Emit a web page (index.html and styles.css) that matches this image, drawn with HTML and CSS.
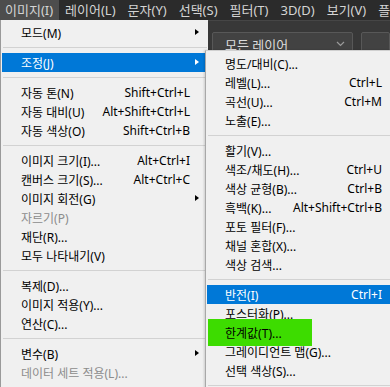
FILE: index.html
```html
<!DOCTYPE html>
<html lang="ko">
<head>
    <meta charset="UTF-8">
    <meta name="viewport" content="width=device-width, initial-scale=1.0">
    <title>이미지 메뉴</title>
    <link rel="stylesheet" href="styles.css">
</head>
<body>
    <div class="app">
        <nav class="menubar">
            <span class="menubar-item active">이미지(I)</span>
            <span class="menubar-item">레이어(L)</span>
            <span class="menubar-item">문자(Y)</span>
            <span class="menubar-item">선택(S)</span>
            <span class="menubar-item">필터(T)</span>
            <span class="menubar-item">3D(D)</span>
            <span class="menubar-item">보기(V)</span>
            <span class="menubar-item">플러그인(G)</span>
        </nav>

        <div class="options">
            <div class="select">
                <span>모든 레이어</span>
                <svg width="9" height="6" viewBox="0 0 9 6"><path d="M1 1 L4.5 4.5 L8 1" fill="none" stroke="#9a9a9a" stroke-width="1.2"/></svg>
            </div>
            <div class="select small"></div>
        </div>

        <!-- 이미지 메뉴 -->
        <ul class="menu main-menu">
            <li class="item"><span class="label">모드(M)</span><span class="arrow"></span></li>
            <li class="sep"></li>
            <li class="item selected"><span class="label">조정(J)</span><span class="arrow"></span></li>
            <li class="sep"></li>
            <li class="item"><span class="label">자동 톤(N)</span><span class="key">Shift+Ctrl+L</span><span class="arrow none"></span></li>
            <li class="item"><span class="label">자동 대비(U)</span><span class="key">Alt+Shift+Ctrl+L</span><span class="arrow none"></span></li>
            <li class="item"><span class="label">자동 색상(O)</span><span class="key">Shift+Ctrl+B</span><span class="arrow none"></span></li>
            <li class="sep"></li>
            <li class="item"><span class="label">이미지 크기(I)...</span><span class="key">Alt+Ctrl+I</span><span class="arrow none"></span></li>
            <li class="item"><span class="label">캔버스 크기(S)...</span><span class="key">Alt+Ctrl+C</span><span class="arrow none"></span></li>
            <li class="item"><span class="label">이미지 회전(G)</span><span class="arrow"></span></li>
            <li class="item disabled"><span class="label">자르기(P)</span></li>
            <li class="item"><span class="label">재단(R)...</span></li>
            <li class="item"><span class="label">모두 나타내기(V)</span></li>
            <li class="sep"></li>
            <li class="item"><span class="label">복제(D)...</span></li>
            <li class="item"><span class="label">이미지 적용(Y)...</span></li>
            <li class="item"><span class="label">연산(C)...</span></li>
            <li class="sep"></li>
            <li class="item"><span class="label">변수(B)</span><span class="arrow"></span></li>
            <li class="item disabled"><span class="label">데이터 세트 적용(L)...</span></li>
        </ul>

        <!-- 조정 하위 메뉴 -->
        <ul class="menu sub-menu">
            <li class="item"><span class="label">명도/대비(C)...</span></li>
            <li class="item"><span class="label">레벨(L)...</span><span class="key">Ctrl+L</span></li>
            <li class="item"><span class="label">곡선(U)...</span><span class="key">Ctrl+M</span></li>
            <li class="item"><span class="label">노출(E)...</span></li>
            <li class="sep"></li>
            <li class="item"><span class="label">활기(V)...</span></li>
            <li class="item"><span class="label">색조/채도(H)...</span><span class="key">Ctrl+U</span></li>
            <li class="item"><span class="label">색상 균형(B)...</span><span class="key">Ctrl+B</span></li>
            <li class="item"><span class="label">흑백(K)...</span><span class="key">Alt+Shift+Ctrl+B</span></li>
            <li class="item"><span class="label">포토 필터(F)...</span></li>
            <li class="item"><span class="label">채널 혼합(X)...</span></li>
            <li class="item"><span class="label">색상 검색...</span></li>
            <li class="sep"></li>
            <li class="item selected"><span class="label">반전(I)</span><span class="key">Ctrl+I</span></li>
            <li class="item"><span class="label">포스터화(P)...</span></li>
            <li class="item marked"><span class="label">한계값(T)...</span></li>
            <li class="item"><span class="label">그레이디언트 맵(G)...</span></li>
            <li class="item"><span class="label">선택 색상(S)...</span></li>
            <li class="sep"></li>
        </ul>
    </div>
</body>
</html>
```

FILE: styles.css
```css
body {
    margin: 0;
    padding: 0;
    background-color: #383838;
    font-family: "Noto Sans", "Noto Sans CJK KR", sans-serif;
    font-size: 12px;
}

.app {
    position: relative;
    width: 390px;
    height: 387px;
    overflow: hidden;
}

.menubar {
    display: flex;
    height: 20px;
    background-color: #2b2b2b;
    color: #d4d4d4;
    font-size: 13px;
    line-height: 20px;
    overflow: hidden;
}

.menubar-item {
    padding: 0 6px;
    white-space: nowrap;
}

.menubar-item.active {
    padding-left: 5px;
    background-color: #4d4d4d;
}

.options {
    display: flex;
    gap: 8px;
    padding: 11px 0 0 212px;
    height: 30px;
    box-sizing: border-box;
    border-top: 1px solid #464646;
    background-color: #383838;
}

.select {
    display: flex;
    justify-content: space-between;
    align-items: center;
    width: 153px;
    height: 24px;
    padding: 0 7px 0 12px;
    box-sizing: border-box;
    background-color: #424242;
    border: 1px solid #585858;
    border-radius: 2px;
    color: #dcdcdc;
    font-size: 13px;
}

.select.small {
    width: 30px;
}

.menu {
    position: absolute;
    margin: 0;
    list-style: none;
    background-color: #f0f0f0;
    color: #000;
    box-sizing: border-box;
}

.main-menu {
    top: 20px;
    left: 0;
    width: 208px;
    height: 370px;
    padding: 3px 1px 0 1px;
    border-left: 1px solid #9a9a9a;
}

.sub-menu {
    top: 50px;
    left: 205px;
    width: 195px;
    padding: 3px 1px 0 1px;
    border-left: 1px solid #a8a8a8;
    border-top: 1px solid #d0d0d0;
    box-shadow: -1px 0 2px rgba(0, 0, 0, 0.15);
}

.item {
    display: flex;
    align-items: center;
    height: 19px;
    padding-left: 19px;
    white-space: nowrap;
    position: relative;
}

.main-menu .label {
    flex: 1;
}

.main-menu .key {
    text-align: right;
}

.sub-menu .item {
    padding-left: 18px;
    padding-right: 17px;
}

.sub-menu .label {
    flex: 1;
}

.arrow {
    width: 17px;
    height: 19px;
    position: relative;
}

.arrow::after {
    content: "";
    position: absolute;
    left: 5px;
    top: 6px;
    border-left: 4px solid #000;
    border-top: 3.5px solid transparent;
    border-bottom: 3.5px solid transparent;
}

.arrow.none::after {
    display: none;
}

.item.selected {
    background-color: #0078d7;
    color: #fff;
}

.item.selected .arrow::after {
    border-left-color: #fff;
}

.item.disabled {
    color: #8c8c8c;
}

.sep {
    height: 1px;
    margin: 5px 0 5px 1px;
    background-color: #d2d2d2;
}

.item.marked::before {
    content: "";
    position: absolute;
    left: 1px;
    top: -4px;
    width: 104px;
    height: 27px;
    background-color: #3ddc00;
}

.item.marked .label {
    position: relative;
}
```
